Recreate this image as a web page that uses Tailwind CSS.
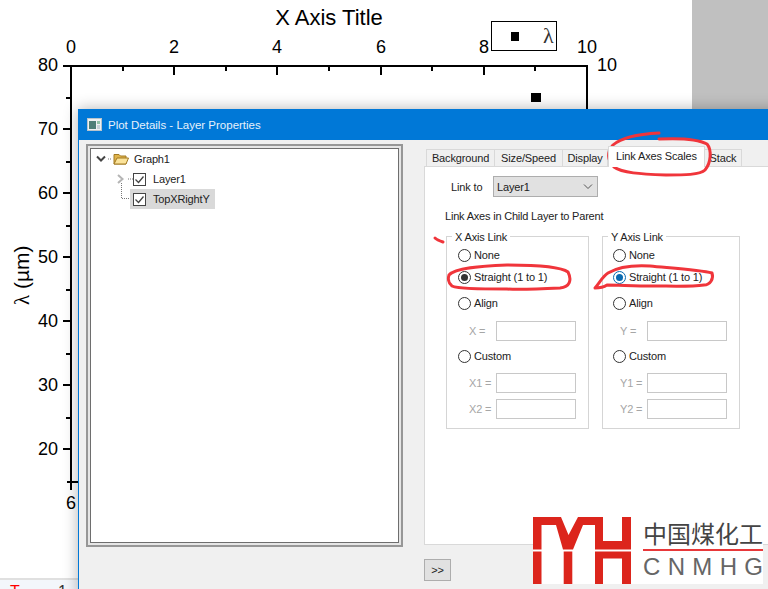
<!DOCTYPE html>
<html lang="en">
  <head>
    <meta charset="UTF-8" />
    <meta name="viewport" content="width=device-width, initial-scale=1.0" />
    <title>Plot Details - Layer Properties</title>
    <script src="https://cdn.jsdelivr.net/npm/@tailwindcss/browser@4"></script>
  </head>
  <body class="bg-white">
    <div class="relative w-[768px] h-[589px] overflow-hidden bg-white font-['Liberation_Sans',sans-serif]">
      <!-- Graph window behind the dialog -->
      <div class="absolute left-[692px] top-0 w-[76px] h-[120px] bg-[#c0c0c0]"></div>
      <div class="absolute left-0 top-[578px] w-[90px] h-[11px] border-t-2 border-[#e0e0e0] bg-[#f3f6fb]"></div>

      <svg class="absolute left-0 top-0" width="768" height="589" font-family="Liberation Sans" font-size="18" fill="#000">
        <text x="329" y="25" font-size="22" text-anchor="middle">X Axis Title</text>

        <!-- top axis -->
        <text x="71" y="53" text-anchor="middle">0</text>
        <text x="174" y="53" text-anchor="middle">2</text>
        <text x="277" y="53" text-anchor="middle">4</text>
        <text x="381" y="53" text-anchor="middle">6</text>
        <text x="484" y="53" text-anchor="middle">8</text>
        <text x="587" y="53" text-anchor="middle">10</text>
        <text x="597" y="71">10</text>

        <!-- left axis -->
        <text x="58" y="71" text-anchor="end">80</text>
        <text x="58" y="135" text-anchor="end">70</text>
        <text x="58" y="199" text-anchor="end">60</text>
        <text x="58" y="263" text-anchor="end">50</text>
        <text x="58" y="327" text-anchor="end">40</text>
        <text x="58" y="391" text-anchor="end">30</text>
        <text x="58" y="455" text-anchor="end">20</text>
        <text x="71" y="509" text-anchor="middle">6</text>
        <text transform="translate(29 305) rotate(-90)" font-size="21"><tspan font-family="Liberation Serif">λ</tspan> (µm)</text>

        <g stroke="#000" stroke-width="2" fill="none">
          <path d="M63 66H588M71 66V490M587 66V112" />
          <path d="M63 129H71M63 193H71M63 257H71M63 321H71M63 385H71M63 449H71" />
          <path d="M66 98H71M66 162H71M66 226H71M66 290H71M66 354H71M66 418H71M67 482H80" />
          <path d="M174 66V75M277 66V75M381 66V75M484 66V75" />
          <path d="M123 66V71M226 66V71M329 66V71M432 66V71M535 66V71" />
        </g>
        <rect x="531" y="93" width="10" height="9" />

        <!-- legend -->
        <rect x="491.5" y="21.5" width="65" height="29" fill="#fff" stroke="#000" />
        <rect x="511" y="32" width="8" height="9" />
        <text x="543" y="43" font-family="Liberation Serif" font-size="22" fill="#333">λ</text>

        <!-- status strip bits -->
        <text x="10" y="597" font-size="16" fill="#f00">T</text>
        <text x="58" y="597" font-size="16" fill="#333">1○</text>
      </svg>

      <!-- Dialog -->
      <div class="absolute left-[78px] top-[109px] w-[720px] h-[490px] bg-[#f0f0f0] border-l border-[#0078d7] shadow-[0_0_14px_rgba(0,0,0,0.3)] text-[11px] leading-[14px] tracking-[-0.15px] text-[#222]">
        <div class="h-[31px] bg-[#0078d7] flex items-center pl-[8px] gap-[6px] text-[11.5px] tracking-normal text-[#e6f1fb]">
          <svg width="15" height="13" viewBox="0 0 15 13">
            <rect x="0.5" y="0.5" width="14" height="12" fill="#eef1f3" stroke="#b9c4cc" />
            <rect x="2" y="3" width="7" height="8" fill="#4d7f78" />
            <rect x="10" y="3" width="3" height="3" fill="#8fc2a8" />
            <rect x="10" y="7" width="3" height="4" fill="#c6d2d8" />
          </svg>
          <span>Plot Details - Layer Properties</span>
        </div>

        <div class="flex items-start pl-[7px] pt-[4px]">
          <!-- Layer tree -->
          <div class="w-[317px] h-[403px] shrink-0 border-2 border-[#979797] bg-[#e6e6e6] p-[2px]">
            <div class="w-full h-full border border-[#6e6e6e] bg-white">
              <div class="flex items-center h-[19px] pl-[4px]">
                <svg width="12" height="12" viewBox="0 0 12 12" fill="none" stroke="#444" stroke-width="2"><path d="M2 3.5 6 7.5 10 3.5" /></svg>
                <svg class="ml-[1px]" width="4" height="2"><path d="M0 1H4" stroke="#777" stroke-dasharray="1 1" /></svg>
                <svg class="ml-[1px]" width="16" height="13" viewBox="0 0 16 13">
                  <path d="M1 2.5H6L7.5 4H13V12H1Z" fill="#e0b44c" stroke="#a27a22" />
                  <path d="M1 12 4 6H15.5L13 12Z" fill="#fbe39a" stroke="#a27a22" />
                </svg>
                <span class="ml-[5px]">Graph1</span>
              </div>
              <div class="flex items-center h-[20px] mt-px pl-[25px]">
                <svg width="10" height="12" viewBox="0 0 10 12" fill="none" stroke="#b5b5b5" stroke-width="2"><path d="M2 2 6.5 6 2 10" /></svg>
                <svg class="ml-[2px]" width="5" height="2"><path d="M0 1H5" stroke="#777" stroke-dasharray="1 1" /></svg>
                <svg width="13" height="13" viewBox="0 0 13 13" fill="none">
                  <rect x="0.5" y="0.5" width="12" height="12" fill="#fff" stroke="#444" />
                  <path d="M2.5 6.5 5.5 9.5 10.5 3.5" stroke="#444" stroke-width="1.3" />
                </svg>
                <span class="ml-[7px]">Layer1</span>
              </div>
              <div class="flex items-center h-[20px] pl-[30px]">
                <svg class="self-start -mt-[6px]" width="9" height="16"><path d="M0.5 0V15.5H9" fill="none" stroke="#777" stroke-dasharray="1 1" /></svg>
                <div class="flex items-center w-[85px] h-[20px] bg-[#d9d9d9] pl-[3px]">
                  <svg width="13" height="13" viewBox="0 0 13 13" fill="none">
                    <rect x="0.5" y="0.5" width="12" height="12" fill="#fff" stroke="#444" />
                    <path d="M2.5 6.5 5.5 9.5 10.5 3.5" stroke="#444" stroke-width="1.3" />
                  </svg>
                  <span class="ml-[7px]">TopXRightY</span>
                </div>
              </div>
            </div>
          </div>

          <!-- Tabs and properties -->
          <div class="ml-[21px] w-[420px] shrink-0 mt-[5px]">
            <div class="flex items-end h-[17px] pl-[2px]">
              <div class="w-[69px] h-[17px] bg-[#f0f0f0] border border-b-0 border-[#d9d9d9] flex items-center justify-center">Background</div>
              <div class="w-[68px] h-[17px] bg-[#f0f0f0] border border-b-0 border-l-0 border-[#d9d9d9] flex items-center justify-center">Size/Speed</div>
              <div class="w-[45px] h-[17px] bg-[#f0f0f0] border border-b-0 border-l-0 border-[#d9d9d9] flex items-center justify-center">Display</div>
              <div class="w-[97px] h-[21px] bg-white border border-b-0 border-[#d9d9d9] flex items-center justify-center pb-[3px] z-10 -mb-px">Link Axes Scales</div>
              <div class="w-[37px] h-[17px] bg-[#f0f0f0] border border-b-0 border-l-0 border-[#d9d9d9] flex items-center justify-center">Stack</div>
            </div>
            <div class="w-[420px] h-[379px] bg-white border border-[#d9d9d9] pt-[9px]">
              <div class="flex items-center pl-[26px]">
                <span class="w-[42px]">Link to</span>
                <div class="w-[105px] h-[21px] bg-[#e1e1e1] border border-[#adadad] flex items-center justify-between pl-[3px] pr-[4px]">
                  <span>Layer1</span>
                  <svg width="10" height="6" viewBox="0 0 10 6" fill="none" stroke="#555"><path d="M1 0.5 5 4.5 9 0.5" /></svg>
                </div>
              </div>
              <div class="pl-[20px] mt-[12px] tracking-[-0.2px]">Link Axes in Child Layer to Parent</div>

              <div class="flex gap-[13px] pl-[21px] mt-[13px]">
                <!-- X Axis Link -->
                <div class="relative w-[143px] h-[193px] border border-[#d5d5d5] pl-[11px] pt-[11px]">
                  <span class="absolute -top-[7px] left-[5px] bg-white px-[3px]">X Axis Link</span>
                  <label class="flex items-center gap-[3px] h-[14px]">
                    <span class="w-[13px] h-[13px] rounded-full border border-[#333] bg-white"></span>None
                  </label>
                  <label class="flex items-center gap-[3px] h-[14px] mt-[8px]">
                    <span class="w-[13px] h-[13px] rounded-full border border-[#333] bg-white flex items-center justify-center"><span class="w-[7px] h-[7px] rounded-full bg-[#333]"></span></span>Straight (1 to 1)
                  </label>
                  <label class="flex items-center gap-[3px] h-[14px] mt-[12px]">
                    <span class="w-[13px] h-[13px] rounded-full border border-[#333] bg-white"></span>Align
                  </label>
                  <div class="flex items-center h-[20px] mt-[11px] pl-[11px] text-[#a6a6a6]">
                    <span class="w-[27px]">X =</span>
                    <span class="w-[80px] h-[20px] border border-[#c8c8c8] bg-white"></span>
                  </div>
                  <label class="flex items-center gap-[3px] h-[14px] mt-[8px]">
                    <span class="w-[13px] h-[13px] rounded-full border border-[#333] bg-white"></span>Custom
                  </label>
                  <div class="flex items-center h-[20px] mt-[10px] pl-[11px] text-[#a6a6a6]">
                    <span class="w-[27px]">X1 =</span>
                    <span class="w-[80px] h-[20px] border border-[#c8c8c8] bg-white"></span>
                  </div>
                  <div class="flex items-center h-[20px] mt-[6px] pl-[11px] text-[#a6a6a6]">
                    <span class="w-[27px]">X2 =</span>
                    <span class="w-[80px] h-[20px] border border-[#c8c8c8] bg-white"></span>
                  </div>
                </div>

                <!-- Y Axis Link -->
                <div class="relative w-[138px] h-[193px] border border-[#d5d5d5] pl-[10px] pt-[11px]">
                  <span class="absolute -top-[7px] left-[5px] bg-white px-[3px]">Y Axis Link</span>
                  <label class="flex items-center gap-[3px] h-[14px]">
                    <span class="w-[13px] h-[13px] rounded-full border border-[#333] bg-white"></span>None
                  </label>
                  <label class="flex items-center gap-[3px] h-[14px] mt-[8px]">
                    <span class="w-[13px] h-[13px] rounded-full border border-[#0a6ab0] bg-white flex items-center justify-center"><span class="w-[7px] h-[7px] rounded-full bg-[#0a6ab0]"></span></span>Straight (1 to 1)
                  </label>
                  <label class="flex items-center gap-[3px] h-[14px] mt-[12px]">
                    <span class="w-[13px] h-[13px] rounded-full border border-[#333] bg-white"></span>Align
                  </label>
                  <div class="flex items-center h-[20px] mt-[11px] pl-[7px] text-[#a6a6a6]">
                    <span class="w-[27px]">Y =</span>
                    <span class="w-[80px] h-[20px] border border-[#c8c8c8] bg-white"></span>
                  </div>
                  <label class="flex items-center gap-[3px] h-[14px] mt-[8px]">
                    <span class="w-[13px] h-[13px] rounded-full border border-[#333] bg-white"></span>Custom
                  </label>
                  <div class="flex items-center h-[20px] mt-[10px] pl-[7px] text-[#a6a6a6]">
                    <span class="w-[27px]">Y1 =</span>
                    <span class="w-[80px] h-[20px] border border-[#c8c8c8] bg-white"></span>
                  </div>
                  <div class="flex items-center h-[20px] mt-[6px] pl-[7px] text-[#a6a6a6]">
                    <span class="w-[27px]">Y2 =</span>
                    <span class="w-[80px] h-[20px] border border-[#c8c8c8] bg-white"></span>
                  </div>
                </div>
              </div>
            </div>
            <button class="mt-[14px] w-[27px] h-[22px] bg-[#e1e1e1] border border-[#adadad] flex items-center justify-center">&gt;&gt;</button>
          </div>
        </div>
      </div>

      <!-- Hand drawn red marks -->
      <svg class="absolute left-0 top-0 pointer-events-none" width="768" height="589" fill="none" stroke="#f0353b" stroke-width="3" stroke-linecap="round" stroke-linejoin="round">
        <path d="M659 133C640 134 622 137 613 145C607 152 607 160 614 167C622 173 640 174 666 175C684 175 700 175 705 170C711 163 712 150 707 144C698 139 680 138 659 139" />
        <path d="M449 275C455 268 480 266 507 265C530 265 560 266 568 272C572 280 570 287 560 288C540 289 520 290 507 289C480 289 458 289 452 286C448 283 448 278 449 275Z" />
        <path d="M595 288C600 282 603 276 608 273C618 267 633 265 650 266C670 268 700 270 712 273C714 279 710 285 704 285C690 287 670 286 653 286C635 286 618 285 607 285C604 287 600 288 595 288Z" />
        <path d="M435 238C437 240 440 241 443 242" />
      </svg>

      <!-- Watermark logo -->
      <div class="absolute left-[533px] top-[517px] w-[230px] h-[67px] bg-white flex gap-[12px]">
        <svg class="shrink-0" width="98" height="67" viewBox="533 517 98 67" fill="#dc251c">
          <path d="M533 517H561L568.5 535 578 517H603V541H622V517H631V549.5H595V525H583L573 549.5H563L556 525H541.5V549.5H533Z" />
          <path d="M533 551.5H541.5V584H533ZM563.7 551.5H572.3V584H563.7ZM595 551.5H631V584H622V558.5H603V584H595Z" />
        </svg>
        <div class="w-[120px]">
          <div class="h-[32px] text-[24px] leading-[32px] text-[#444] font-['Noto_Sans_CJK_SC',sans-serif] whitespace-nowrap">中国煤化工</div>
          <div class="h-[2px] bg-[#e8383a]"></div>
          <div class="flex justify-between text-[24px] leading-[30px] text-[#666] mt-[1px]">
            <span>C</span><span>N</span><span>M</span><span>H</span><span>G</span>
          </div>
        </div>
      </div>
    </div>
  </body>
</html>
